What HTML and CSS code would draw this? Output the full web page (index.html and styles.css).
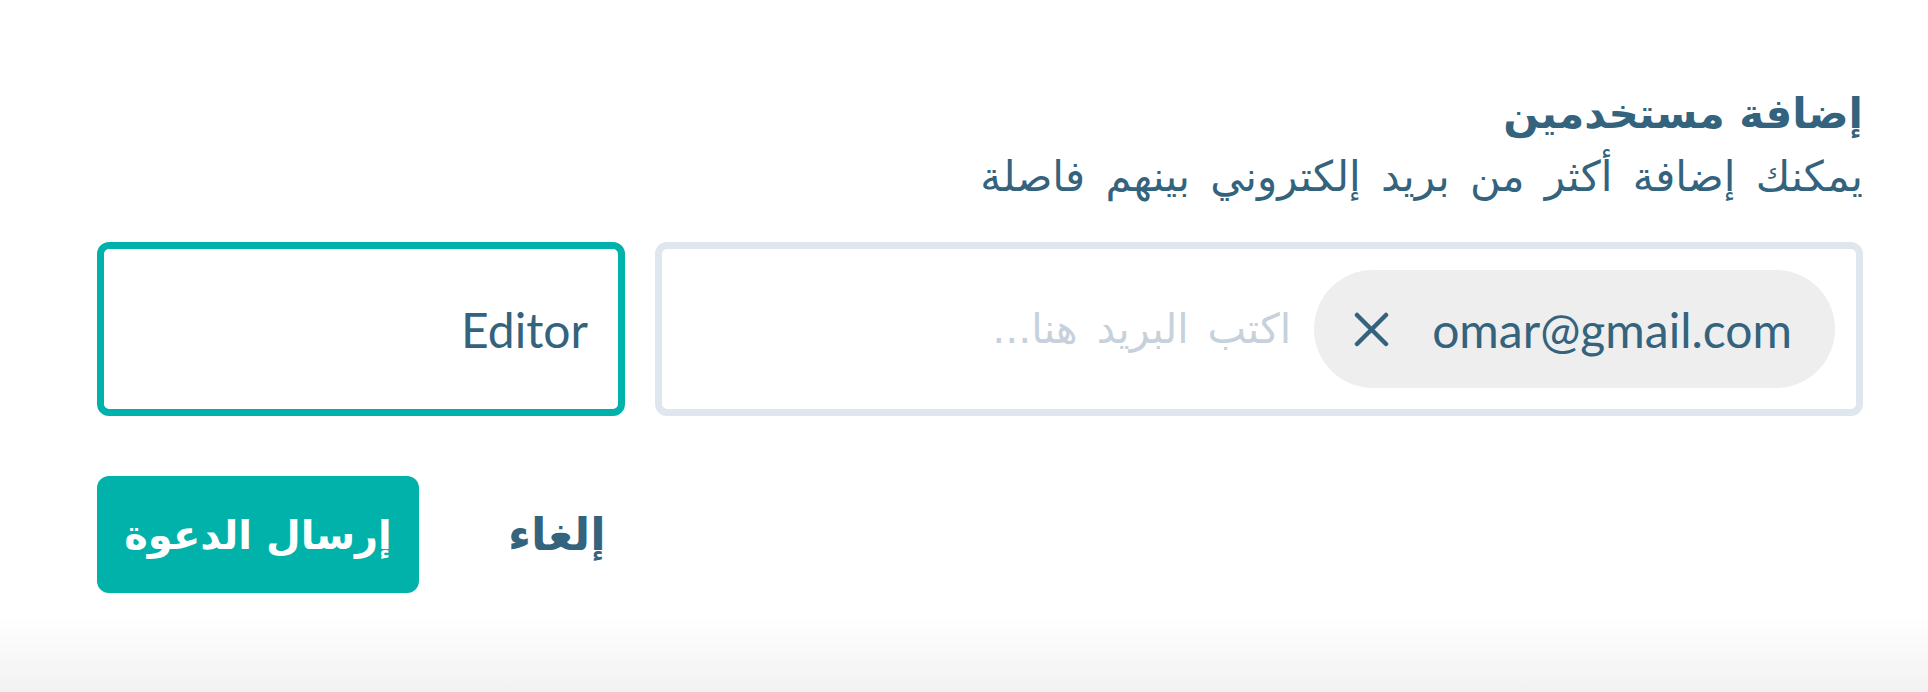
FILE: index.html
```html
<!DOCTYPE html>
<html lang="ar" dir="rtl">
<head>
<meta charset="utf-8">
<title>إضافة مستخدمين</title>
<link rel="stylesheet" href="styles.css">
</head>
<body>
<main class="page">
  <section class="invite">
    <h2 class="title">إضافة مستخدمين</h2>
    <p class="hint">يمكنك إضافة أكثر من بريد إلكتروني بينهم فاصلة</p>
    <div class="fields">
      <div class="email-box">
        <span class="chip">
          <span class="chip-text" dir="ltr">omar@gmail.com</span>
          <span class="chip-remove" aria-label="remove">
            <svg width="35" height="35" viewBox="0 0 35 35"><path d="M3 3 L32 32 M32 3 L3 32" stroke="#33637d" stroke-width="4.5" stroke-linecap="round" fill="none"/></svg>
          </span>
        </span>
        <input class="email-input" type="text" placeholder="اكتب البريد هنا...">
      </div>
      <div class="role-box"><span class="role-text">Editor</span></div>
    </div>
    <div class="actions">
      <button class="btn btn-cancel">إلغاء</button>
      <button class="btn btn-send">إرسال الدعوة</button>
    </div>
  </section>
</main>
</body>
</html>
```
FILE: styles.css
```css
* { box-sizing: border-box; }
html, body { margin: 0; padding: 0; }
body {
  font-family: Lato, "DejaVu Sans", sans-serif;
  color: #33637d;
  background: #fff;
}
.page {
  height: 692px;
  padding: 88px 65px 0 97px;
  background: linear-gradient(to bottom, #ffffff 0, #ffffff 615px, #f2f2f2 692px);
}
.title {
  margin: 0;
  font-family: "DejaVu Sans", sans-serif;
  font-weight: 700;
  font-size: 42px;
  line-height: 52px;
  color: #33637d;
}
.hint {
  margin: 12px 0 0;
  font-family: "DejaVu Sans", sans-serif;
  font-size: 42px;
  line-height: 50px;
  word-spacing: 7px;
  color: #33637d;
}
.fields {
  margin-top: 40px;
  display: grid;
  grid-template-columns: 1fr 528px;
  gap: 30px;
}
.email-box {
  height: 174px;
  border: 7px solid #dfe6ee;
  border-radius: 12px;
  padding: 21px;
  display: flex;
  align-items: center;
  gap: 23px;
}
.chip {
  height: 118px;
  border-radius: 59px;
  background: #eeeeee;
  display: flex;
  align-items: center;
  gap: 43px;
  padding: 0 43px 0 40px;
  flex: none;
}
.chip-text {
  font-family: Lato, sans-serif;
  font-size: 48px;
  color: #33637d;
}
.chip-remove { display: flex; }
.email-input {
  flex: 1;
  min-width: 0;
  border: 0;
  outline: 0;
  background: transparent;
  padding: 0;
  font-family: "DejaVu Sans", sans-serif;
  font-size: 41px;
  word-spacing: 6px;
  color: #33637d;
}
.email-input::placeholder { color: #c6d1dc; }
.role-box {
  height: 174px;
  border: 7px solid #00b2a9;
  border-radius: 12px;
  padding: 0 30px;
  display: flex;
  align-items: center;
}
.role-text {
  font-family: Lato, sans-serif;
  font-size: 48px;
  color: #33637d;
}
.actions {
  margin-top: 60px;
  display: flex;
  justify-content: flex-end;
  gap: 60px;
}
.btn {
  height: 117px;
  border: 0;
  border-radius: 12px;
  padding: 0 29px;
  font-family: "DejaVu Sans", sans-serif;
  font-weight: 700;
  font-size: 40px;
  white-space: nowrap;
  cursor: pointer;
}
.btn-cancel {
  background: transparent;
  color: #33637d;
  font-size: 45px;
}
.btn-send {
  width: 322px;
  padding: 0;
  text-align: center;
  background: #00b2a9;
  color: #ffffff;
}
```
